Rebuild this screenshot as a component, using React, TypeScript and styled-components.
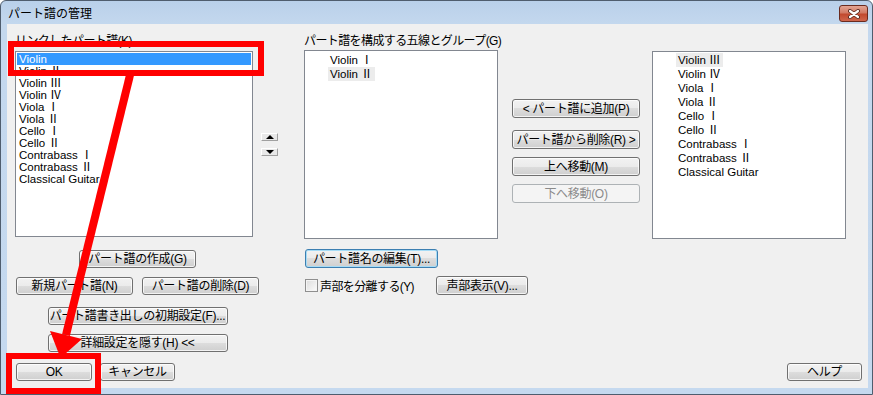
import React from "react";
import styled, { createGlobalStyle } from "styled-components";

const UI = `"Liberation Sans", "Noto Sans CJK JP", sans-serif`;

// Global
const GlobalStyle = createGlobalStyle`
    html, body {
        margin: 0;
        padding: 0;
        background: #ffffff;
    }
    body {
        font-family: ${UI};
        font-size: 12px;
    }
`;

// Window frame
const Window = styled.div`
    position: relative;
    width: 873px;
    height: 395px;
    box-sizing: border-box;
    border: 1px solid #4f5d6e;
    border-radius: 6px 6px 0 0;
    background: linear-gradient(#b9d0ea 0px, #c4d8ee 24px, #c5d9ef 100%);
    display: flex;
    flex-direction: column;
    overflow: hidden;
`;

const TitleBar = styled.div`
    height: 23px;
    display: flex;
    align-items: flex-start;
    justify-content: space-between;
    padding: 0 4px 0 7px;
`;

const Title = styled.span`
    font-size: 12px;
    line-height: 14px;
    margin-top: 6px;
    color: #000;
`;

const CloseButton = styled.div`
    width: 27px;
    height: 15px;
    margin-top: 4px;
    border: 1px solid #6a2b1f;
    border-radius: 3px;
    background: linear-gradient(#e3a594 0%, #d27a64 45%, #c24a2f 55%, #d0664c 100%);
    display: flex;
    align-items: center;
    justify-content: center;
`;

const Client = styled.div`
    flex: 1;
    margin: 0 4px 6px 6px;
    background: #f0f0f0;
    padding: 10px 6px 0 8px;
    display: flex;
    flex-direction: column;
`;

const Main = styled.div`
    display: flex;
    align-items: flex-start;
`;

const Column = styled.div<{ $w: number; $ml?: number; $pt?: number }>`
    width: ${(p) => p.$w}px;
    margin-left: ${(p) => p.$ml ?? 0}px;
    padding-top: ${(p) => p.$pt ?? 0}px;
    display: flex;
    flex-direction: column;
    align-items: flex-start;
`;

const GroupLabel = styled.div`
    line-height: 14px;
    height: 14px;
    letter-spacing: -0.6px;
    white-space: nowrap;
    color: #000;
`;

// List boxes
const ListRow = styled.div`
    display: flex;
    align-items: center;
    margin-top: 3px;
`;

const ListBox = styled.div<{ $w: number; $h: number; $mt?: number; $pl?: number; $pt?: number }>`
    width: ${(p) => p.$w}px;
    height: ${(p) => p.$h}px;
    margin-top: ${(p) => p.$mt ?? 0}px;
    box-sizing: border-box;
    border: 1px solid #828790;
    background: #ffffff;
    padding: ${(p) => p.$pt ?? 1}px 0 0 ${(p) => p.$pl ?? 0}px;
    font-size: 11.5px;
    overflow: hidden;
`;

const PlainItem = styled.div<{ $selected?: boolean }>`
    height: 12px;
    line-height: 12px;
    margin: 0 1px;
    padding-left: 2px;
    white-space: nowrap;
    color: ${(p) => (p.$selected ? "#ffffff" : "#000000")};
    background: ${(p) => (p.$selected ? "#3399ff" : "transparent")};
`;

const TreeItem = styled.div`
    height: 14px;
    line-height: 14px;
`;

const TreeText = styled.span<{ $hl?: boolean }>`
    display: inline-block;
    padding: 0 2px;
    white-space: nowrap;
    background: ${(p) => (p.$hl ? "#ececec" : "transparent")};
`;

const Spinner = styled.div`
    margin-left: 8px;
    display: flex;
    flex-direction: column;
    gap: 7px;
`;

const SpinButton = styled.div<{ $down?: boolean }>`
    width: 17px;
    height: 8px;
    box-sizing: border-box;
    border: 1px solid;
    border-color: #ffffff #a0a0a0 #a0a0a0 #ffffff;
    background: #e8e8e8;
    display: flex;
    align-items: center;
    justify-content: center;

    &::after {
        content: "";
        border-left: 4px solid transparent;
        border-right: 4px solid transparent;
        ${(p) => (p.$down ? "border-top: 4px solid #000;" : "border-bottom: 4px solid #000;")}
    }
`;

// Buttons
const Button = styled.button<{ $w: number; $h?: number; $focus?: boolean }>`
    width: ${(p) => p.$w}px;
    height: ${(p) => p.$h ?? 18}px;
    box-sizing: border-box;
    padding: 0;
    font-family: ${UI};
    font-size: 12px;
    line-height: 14px;
    letter-spacing: -0.3px;
    white-space: nowrap;
    color: #000000;
    border: 1px solid ${(p) => (p.$focus ? "#3c7fb1" : "#707070")};
    border-radius: 3px;
    background: linear-gradient(#f2f2f2 0%, #ebebeb 50%, #dddddd 50%, #cfcfcf 100%);
    box-shadow: inset 0 0 0 1px ${(p) => (p.$focus ? "#a6dcf6" : "rgba(255, 255, 255, 0.75)")};
    display: flex;
    align-items: center;
    justify-content: center;

    &:disabled {
        color: #8b8b8b;
        border-color: #adb2b5;
        background: #f4f4f4;
        box-shadow: none;
    }
`;

const LeftButtons = styled.div`
    width: 243px;
    margin: 13px 0 0 1px;
    display: flex;
    flex-direction: column;
    align-items: center;
`;

const ButtonRow = styled.div<{ $mt: number; $gap?: number }>`
    margin-top: ${(p) => p.$mt}px;
    display: flex;
    gap: ${(p) => p.$gap ?? 0}px;
`;

const MoveButtons = styled.div`
    display: flex;
    flex-direction: column;
`;

const Spaced = styled.div<{ $mt: number; $ml?: number }>`
    margin-top: ${(p) => p.$mt}px;
    margin-left: ${(p) => p.$ml ?? 0}px;
`;

// Checkbox row
const CheckRow = styled.div`
    margin: 8px 0 0 1px;
    display: flex;
    align-items: center;
`;

const CheckBox = styled.span`
    width: 13px;
    height: 13px;
    box-sizing: border-box;
    border: 1px solid #8f8f8f;
    background: linear-gradient(135deg, #dcdcdc, #fbfbfb);
    box-shadow: inset 0 0 0 1px #f4f4f4;
`;

const CheckLabel = styled.span`
    width: 116px;
    margin-left: 2px;
    letter-spacing: -0.6px;
    white-space: nowrap;
`;

// Bottom bar
const BottomBar = styled.div`
    margin-top: 11px;
    padding-left: 1px;
    display: flex;
    justify-content: space-between;
`;

const BottomGroup = styled.div`
    display: flex;
    gap: 8px;
`;

// Annotation overlay
const Overlay = styled.svg`
    position: absolute;
    left: 0;
    top: 0;
    pointer-events: none;
`;

const linked = [
    "Violin",
    "Violin Ⅱ",
    "Violin Ⅲ",
    "Violin Ⅳ",
    "Viola Ⅰ",
    "Viola Ⅱ",
    "Cello Ⅰ",
    "Cello Ⅱ",
    "Contrabass Ⅰ",
    "Contrabass Ⅱ",
    "Classical Guitar",
];

const staves = ["Violin Ⅰ", "Violin Ⅱ"];

const available = [
    "Violin Ⅲ",
    "Violin Ⅳ",
    "Viola Ⅰ",
    "Viola Ⅱ",
    "Cello Ⅰ",
    "Cello Ⅱ",
    "Contrabass Ⅰ",
    "Contrabass Ⅱ",
    "Classical Guitar",
];

function App() {
    return (
        <>
            <GlobalStyle />
            <Window>
                <TitleBar>
                    <Title>パート譜の管理</Title>
                    <CloseButton>
                        <svg width="14" height="10" viewBox="0 0 14 10">
                            <path d="M3 2 L11 8 M11 2 L3 8" stroke="#5a2a20" strokeWidth="4" strokeLinecap="round" />
                            <path d="M3 2 L11 8 M11 2 L3 8" stroke="#ffffff" strokeWidth="2.2" strokeLinecap="round" />
                        </svg>
                    </CloseButton>
                </TitleBar>
                <Client>
                    <Main>
                        <Column $w={263}>
                            <GroupLabel>リンクしたパート譜(K)</GroupLabel>
                            <ListRow>
                                <ListBox $w={238} $h={186}>
                                    {linked.map((name, i) => (
                                        <PlainItem key={name} $selected={i === 0}>
                                            {name}
                                        </PlainItem>
                                    ))}
                                </ListBox>
                                <Spinner>
                                    <SpinButton />
                                    <SpinButton $down />
                                </Spinner>
                            </ListRow>
                            <LeftButtons>
                                <Button $w={117}>パート譜の作成(G)</Button>
                                <ButtonRow $mt={9} $gap={9}>
                                    <Button $w={117}>新規パート譜(N)</Button>
                                    <Button $w={117}>パート譜の削除(D)</Button>
                                </ButtonRow>
                                <ButtonRow $mt={12}>
                                    <Button $w={180}>パート譜書き出しの初期設定(F)...</Button>
                                </ButtonRow>
                                <ButtonRow $mt={9}>
                                    <Button $w={180}>詳細設定を隠す(H) &lt;&lt;</Button>
                                </ButtonRow>
                            </LeftButtons>
                        </Column>

                        <Column $w={194} $ml={26}>
                            <GroupLabel>パート譜を構成する五線とグループ(G)</GroupLabel>
                            <ListBox $w={194} $h={189} $mt={2} $pl={23} $pt={2}>
                                {staves.map((name, i) => (
                                    <TreeItem key={name}>
                                        <TreeText $hl={i === 1}>{name}</TreeText>
                                    </TreeItem>
                                ))}
                            </ListBox>
                            <Spaced $mt={10} $ml={1}>
                                <Button $w={133} $h={19} $focus>
                                    パート譜名の編集(T)...
                                </Button>
                            </Spaced>
                            <CheckRow>
                                <CheckBox />
                                <CheckLabel>声部を分離する(Y)</CheckLabel>
                                <Button $w={92} $h={19}>声部表示(V)...</Button>
                            </CheckRow>
                        </Column>

                        <Column $w={128} $ml={14} $pt={65}>
                            <MoveButtons>
                                <Button $w={128} $h={19}>&lt; パート譜に追加(P)</Button>
                                <Spaced $mt={12}>
                                    <Button $w={128} $h={19}>パート譜から削除(R) &gt;</Button>
                                </Spaced>
                                <Spaced $mt={8}>
                                    <Button $w={128} $h={19}>上へ移動(M)</Button>
                                </Spaced>
                                <Spaced $mt={8}>
                                    <Button $w={128} $h={19} disabled>
                                        下へ移動(O)
                                    </Button>
                                </Spaced>
                            </MoveButtons>
                        </Column>

                        <Column $w={194} $ml={12} $pt={17}>
                            <ListBox $w={194} $h={188} $pl={23} $pt={1}>
                                {available.map((name, i) => (
                                    <TreeItem key={name}>
                                        <TreeText $hl={i === 0}>{name}</TreeText>
                                    </TreeItem>
                                ))}
                            </ListBox>
                        </Column>
                    </Main>

                    <BottomBar>
                        <BottomGroup>
                            <Button $w={76}>OK</Button>
                            <Button $w={75}>キャンセル</Button>
                        </BottomGroup>
                        <Button $w={75}>ヘルプ</Button>
                    </BottomBar>
                </Client>

                <Overlay width="873" height="395" viewBox="0 0 873 395">
                    <rect x="10" y="43" width="250" height="29" fill="none" stroke="#ff0000" strokeWidth="6" />
                    <rect x="8" y="355" width="89" height="35" fill="none" stroke="#ff0000" strokeWidth="6" />
                    <line x1="130" y1="70" x2="65" y2="334" stroke="#ff0000" strokeWidth="8" />
                    <polygon points="49,330 81,338 59.5,357" fill="#ff0000" />
                </Overlay>
            </Window>
        </>
    );
}

export default App;
